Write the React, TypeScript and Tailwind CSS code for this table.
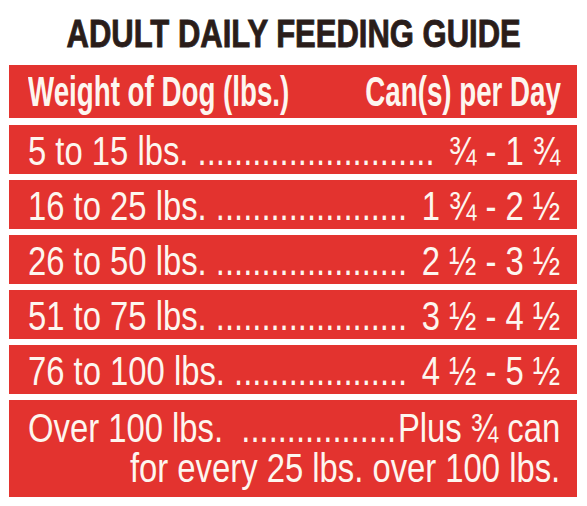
import React from 'react';

interface FeedingRow {
  weight: string;
  dots: number;
  cans: string;
}

const rows: FeedingRow[] = [
  { weight: '5 to 15 lbs.', dots: 26, cans: '¾ - 1 ¾' },
  { weight: '16 to 25 lbs.', dots: 21, cans: '1 ¾ - 2 ½' },
  { weight: '26 to 50 lbs.', dots: 21, cans: '2 ½ - 3 ½' },
  { weight: '51 to 75 lbs.', dots: 21, cans: '3 ½ - 4 ½' },
  { weight: '76 to 100 lbs.', dots: 19, cans: '4 ½ - 5 ½' },
];

const App: React.FC = () => {
  return (
    <div className="w-[587px] h-[506px] bg-white font-['Liberation_Sans',Arial,sans-serif] overflow-hidden">
      <h1 className="flex justify-center pt-[14px] leading-[39px]">
        <span className="block scale-x-[0.795] text-[39px] leading-[39px] font-bold [-webkit-text-stroke:0.9px_#2a1d1a] text-[#2a1d1a] whitespace-nowrap">
          ADULT DAILY FEEDING GUIDE
        </span>
      </h1>

      <div className="mt-[12px] pl-[9px] pr-[10px] flex flex-col gap-[6px] text-[#fdf6ef]">
        <div className="h-[53px] mb-[1px] bg-[#e3332f] pl-[19px] pr-[16px] flex items-center overflow-hidden">
          <div className="w-[151.5%] shrink-0 origin-left scale-x-[0.66] flex justify-between text-[42px] leading-[42px] font-bold whitespace-nowrap">
            <span>Weight of Dog (lbs.)</span>
            <span>Can(s) per Day</span>
          </div>
        </div>

        {rows.map(row => (
          <div key={row.weight} className="h-[49px] bg-[#e3332f] pl-[19px] pr-[17px] pt-[6px] overflow-hidden">
            <div className="w-[122%] origin-left scale-x-[0.82] flex justify-between text-[40px] leading-[40px] whitespace-nowrap">
              <span>{row.weight} {'.'.repeat(row.dots)}</span>
              <span>{row.cans}</span>
            </div>
          </div>
        ))}

        <div className="h-[97px] bg-[#e3332f] pl-[19px] pr-[17px] pt-[8px] overflow-hidden">
          <div className="w-[122%] origin-left scale-x-[0.82] text-[40px] leading-[40px] whitespace-nowrap">
            <div className="flex justify-between">
              <span>Over 100 lbs.&nbsp;&nbsp;{'.'.repeat(17)}</span>
              <span>Plus ¾ can</span>
            </div>
            <div className="text-right">for every 25 lbs. over 100 lbs.</div>
          </div>
        </div>
      </div>
    </div>
  );
};

export default App;
